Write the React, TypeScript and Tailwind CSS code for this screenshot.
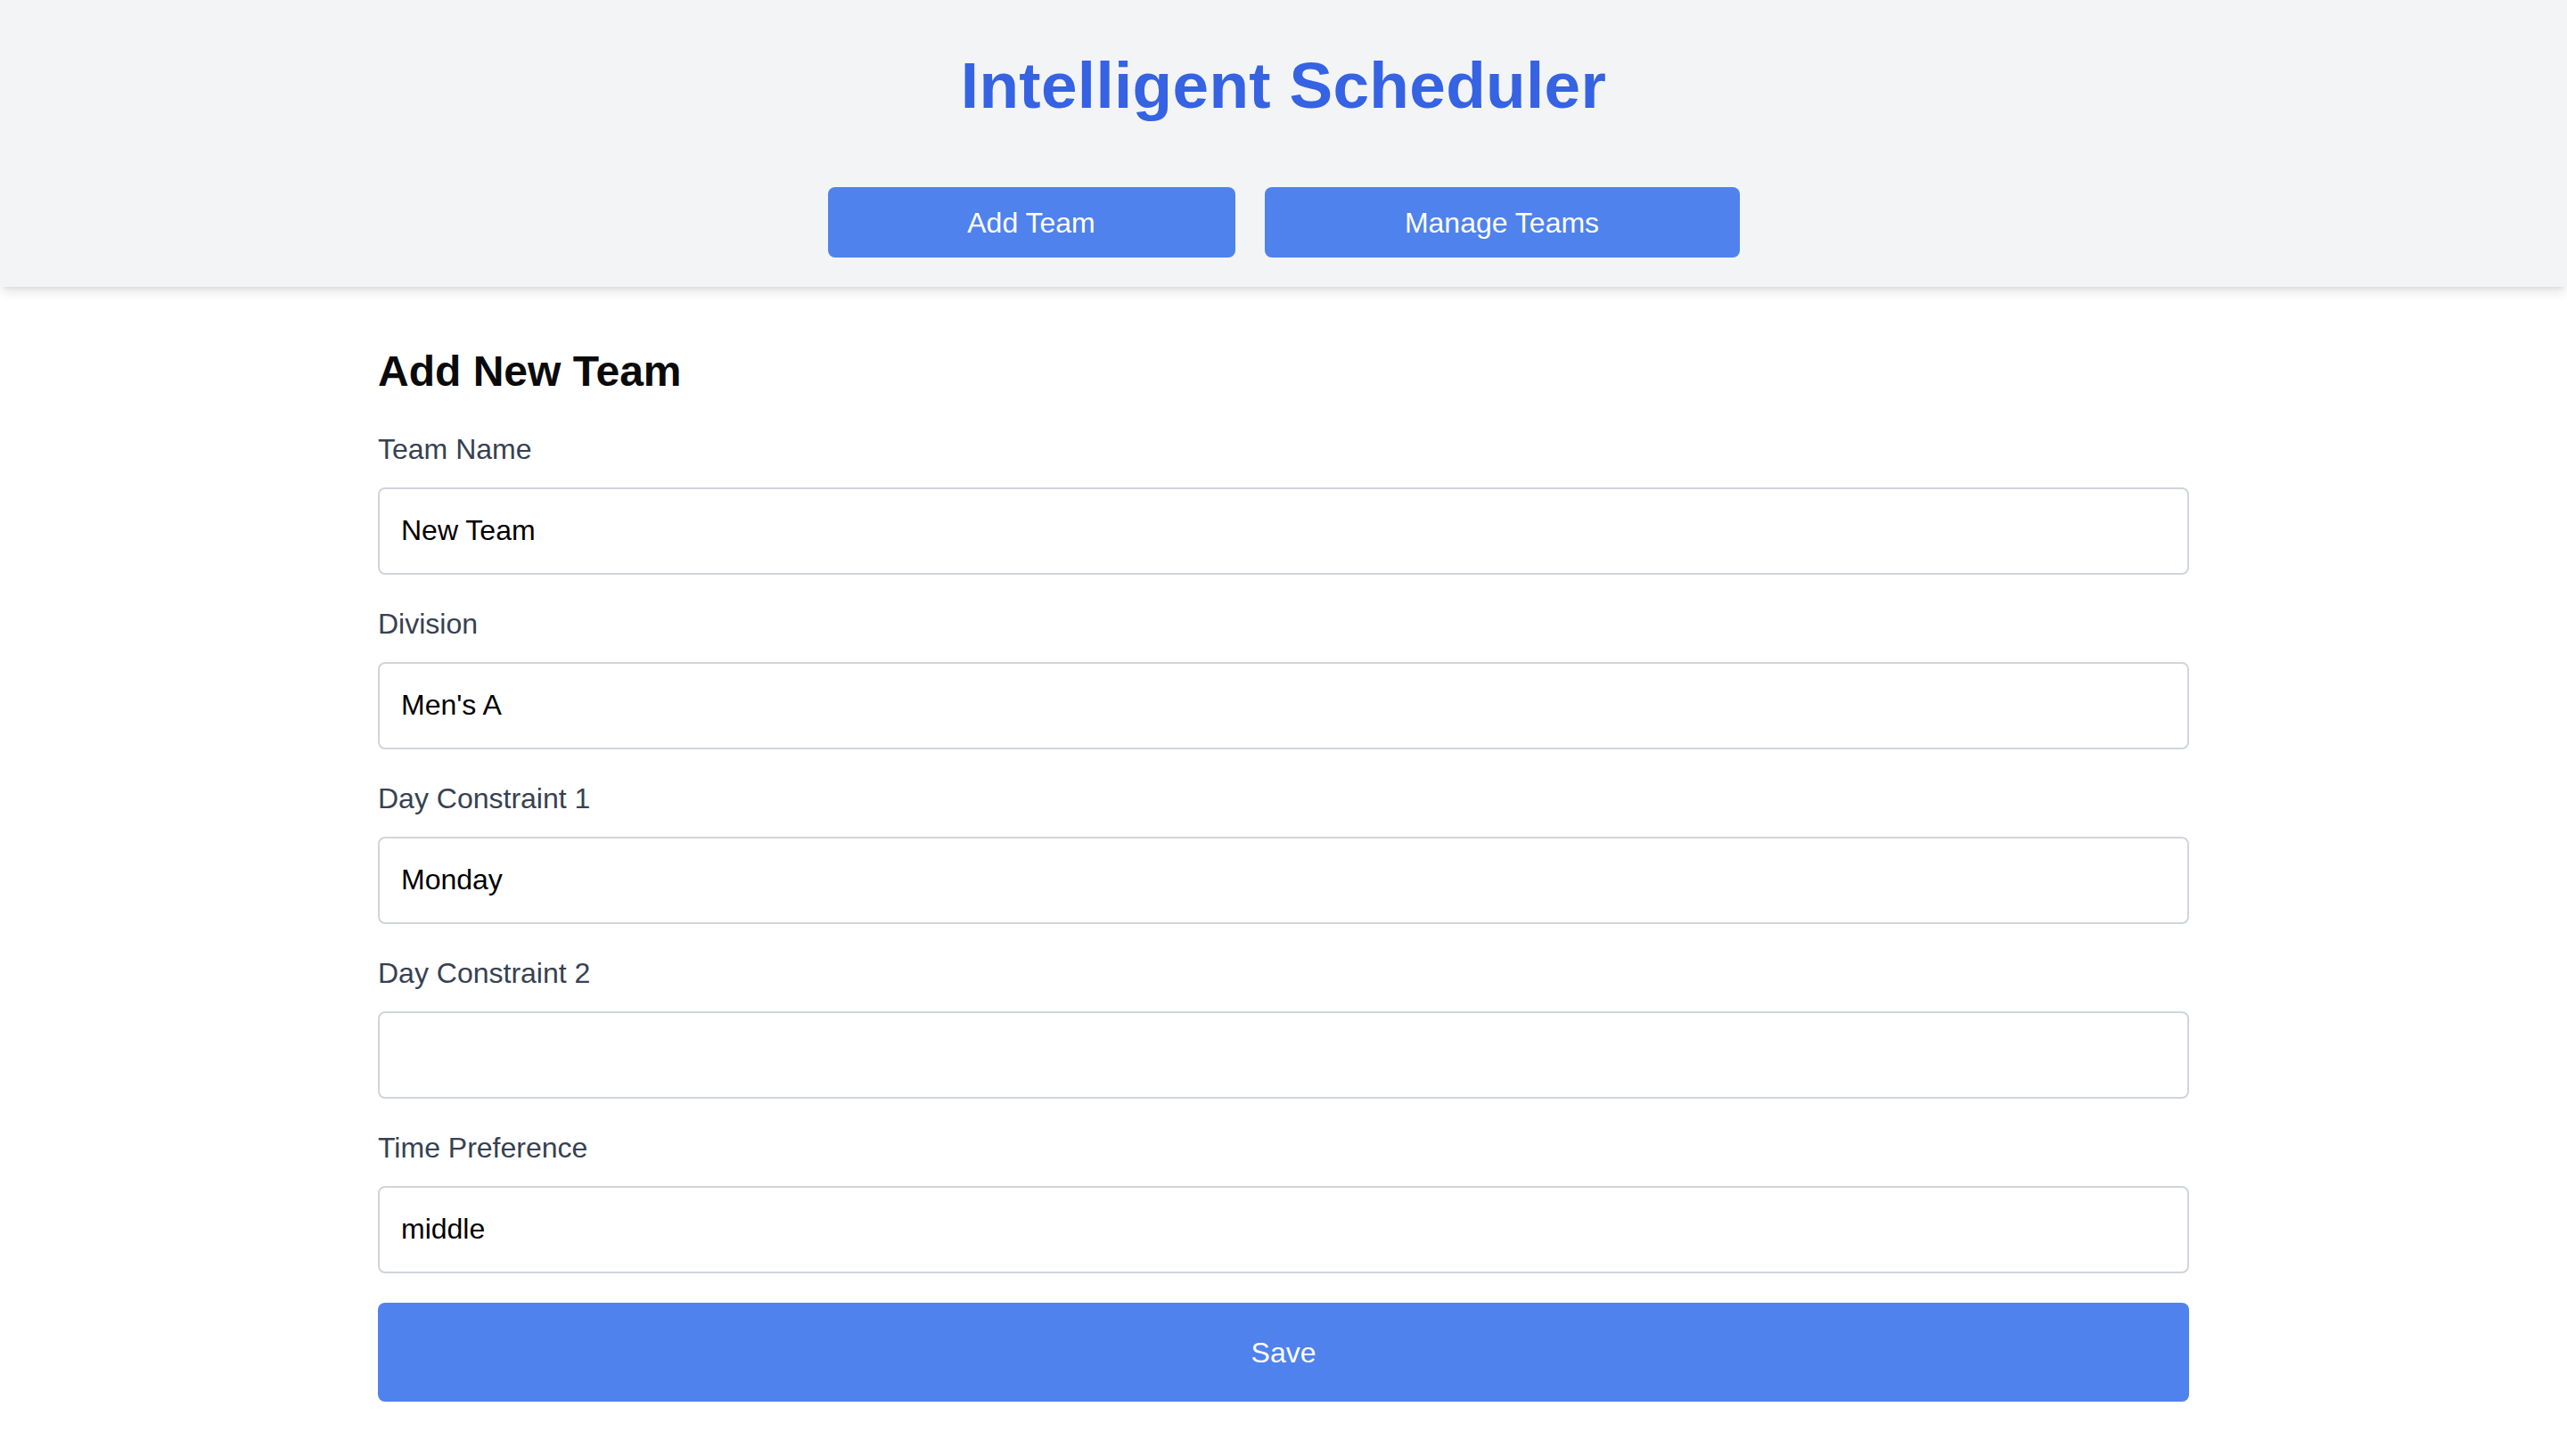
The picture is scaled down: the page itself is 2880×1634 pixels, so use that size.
import React, { useState } from 'react';

const FIELDS = [
  { key: 'name', label: 'Team Name', initial: 'New Team' },
  { key: 'division', label: 'Division', initial: "Men's A" },
  { key: 'day1', label: 'Day Constraint 1', initial: 'Monday' },
  { key: 'day2', label: 'Day Constraint 2', initial: '' },
  { key: 'time', label: 'Time Preference', initial: 'middle' },
];

export default function App() {
  const [values, setValues] = useState<Record<string, string>>(
    Object.fromEntries(FIELDS.map(f => [f.key, f.initial]))
  );
  const [view, setView] = useState<'add' | 'manage'>('add');

  return (
    <div className="min-h-screen bg-white font-['Liberation_Sans',Arial,sans-serif]">
      {/* Header */}
      <header className="bg-[#f3f4f6] pt-[56px] pb-[33px] shadow-[0_8px_12px_-2px_rgba(0,0,0,0.1),0_4px_6px_-4px_rgba(0,0,0,0.1)] relative z-10">
        <h1 className="text-center text-[73px] leading-[80px] font-bold text-[#3563e3] tracking-[0.3px]">
          Intelligent Scheduler
        </h1>
        <nav className="mt-[74px] flex justify-center gap-[33px]">
          <button
            onClick={() => setView('add')}
            className="w-[457px] h-[79px] rounded-[8px] bg-[#4f82ed] text-white text-[32px] leading-[46px]"
          >
            Add Team
          </button>
          <button
            onClick={() => setView('manage')}
            className="w-[533px] h-[79px] rounded-[8px] bg-[#4f82ed] text-white text-[32px] leading-[46px]"
          >
            Manage Teams
          </button>
        </nav>
      </header>

      {/* Form */}
      <main className="w-[2032px] mx-auto pt-[63px]">
        <h2 className="text-[48px] leading-[64px] font-bold text-[#0a0a0a] mb-[32px]">
          {view === 'add' ? 'Add New Team' : 'Add New Team'}
        </h2>
        <form
          className="flex flex-col"
          onSubmit={e => e.preventDefault()}
        >
          {FIELDS.map(f => (
            <div key={f.key} className="flex flex-col mb-[32px]">
              <label className="text-[32px] leading-[46px] text-[#374151] mb-[20px]">{f.label}</label>
              <input
                value={values[f.key]}
                onChange={e => setValues(v => ({ ...v, [f.key]: e.target.value }))}
                className="h-[98px] px-[24px] pb-[2px] border-2 border-[#d1d5db] rounded-[8px] text-[32px] leading-[48px] text-black bg-white outline-none"
              />
            </div>
          ))}
          <button
            type="submit"
            className="mt-[1px] h-[111px] w-full rounded-[8px] bg-[#4f82ed] text-white text-[32px] leading-[46px]"
          >
            Save
          </button>
        </form>
      </main>
    </div>
  );
}
